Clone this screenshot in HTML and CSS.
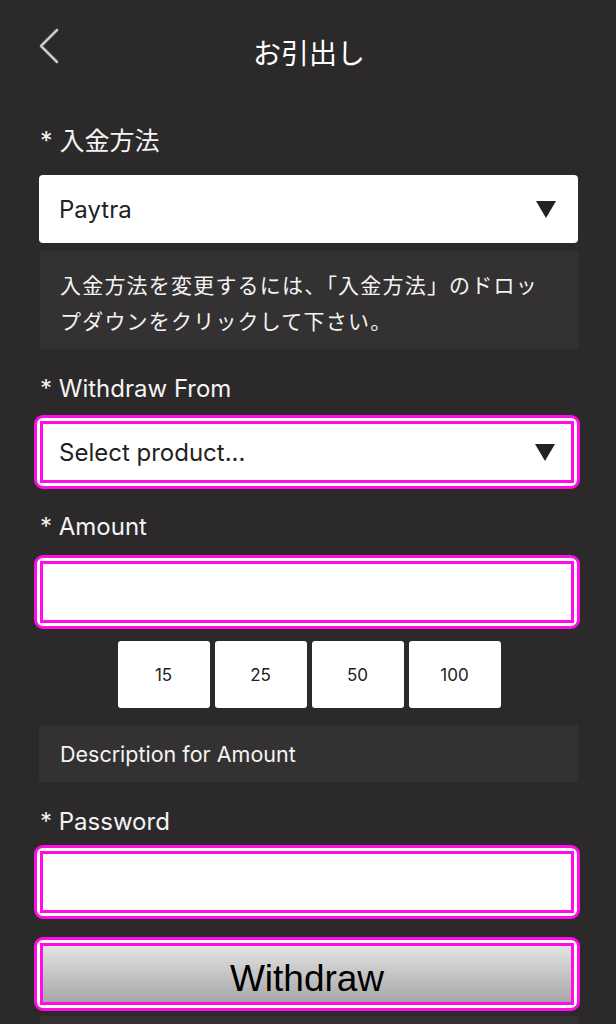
FILE: index.html
```html
<!DOCTYPE html>
<html lang="ja">
<head>
<meta charset="utf-8">
<title>お引出し</title>
<link rel="stylesheet" href="styles.css">
</head>
<body>
<div class="page">
  <header class="header">
    <a class="back" href="#" aria-label="back">
      <svg width="22" height="36" viewBox="0 0 22 36"><path d="M19 2 L3 18 L19 34" fill="none" stroke="#c8c8c8" stroke-width="2.6" stroke-linecap="round" stroke-linejoin="round"/></svg>
    </a>
    <h1 class="title">お引出し</h1>
    <span></span>
  </header>

  <label class="label first">* 入金方法</label>
  <div class="select plain">
    <span>Paytra</span>
    <svg class="caret" width="20" height="17" viewBox="0 0 20 17"><path d="M0 0 H20 L10 17 Z" fill="#222"/></svg>
  </div>
  <div class="note">入金方法を変更するには、「入金方法」のドロップダウンをクリックして下さい。</div>

  <label class="label l2">* Withdraw From</label>
  <div class="ring r1">
    <div class="select inner">
      <span>Select product...</span>
      <svg class="caret" width="20" height="17" viewBox="0 0 20 17"><path d="M0 0 H20 L10 17 Z" fill="#222"/></svg>
    </div>
  </div>

  <label class="label l3">* Amount</label>
  <div class="ring r2">
    <div class="input inner"></div>
  </div>

  <div class="quick">
    <button class="qbtn">15</button>
    <button class="qbtn">25</button>
    <button class="qbtn">50</button>
    <button class="qbtn">100</button>
  </div>

  <div class="desc">Description for Amount</div>

  <label class="label l4">* Password</label>
  <div class="ring r3">
    <div class="input inner"></div>
  </div>

  <div class="ring r4">
    <button class="submit inner">Withdraw</button>
  </div>

  <div class="footer-box"></div>
</div>
</body>
</html>
```

FILE: styles.css
```css
* { box-sizing: border-box; }
html, body { margin: 0; padding: 0; }
body {
  background: #2b292a;
  font-family: Inter, "Noto Sans CJK JP", sans-serif;
  color: #f4f4f4;
  height: 1024px;
  overflow: hidden;
}
.page {
  padding: 0 38px 0 40px;
  display: flex;
  flex-direction: column;
}
.header {
  height: 104px;
  display: grid;
  grid-template-columns: 1fr auto 1fr;
  align-items: start;
}
.back { display: block; margin-top: 28px; margin-left: -2px; width: 22px; height: 36px; }
.back svg { display: block; }
.title {
  margin: 0;
  padding-top: 34px;
  font-family: "Noto Sans CJK JP", sans-serif;
  font-weight: 400;
  font-size: 28px;
  line-height: 36px;
  color: #fff;
}
.label {
  display: block;
  font-size: 24px;
  line-height: 36px;
  color: #f4f4f4;
}
.label.first { margin-top: 19px; font-size: 25px; }
.l2 { margin-top: 22px; }
.l3 { margin-top: 20px; }
.l4 { margin-top: 22px; }

.select {
  background: #fff;
  color: #222;
  font-size: 24px;
  display: flex;
  align-items: center;
  justify-content: space-between;
}
.select.plain {
  margin-top: 16px;
  height: 68px;
  border-radius: 4px;
  padding: 0 22px 0 20px;
  margin-left: -1px;
}
.caret { display: block; }
.note {
  margin-top: 8px;
  background: #333132;
  padding: 15px 20px 11px 20px;
  font-family: "Noto Sans CJK JP", sans-serif;
  font-size: 21px;
  line-height: 36px;
  letter-spacing: 1.2px;
  color: #f4f4f4;
}
.ring {
  margin: 0 -2px 0 -6px;
  border: 3px solid #ff0ce6;
  border-radius: 9px;
  padding: 3px;
  background: #fff;
}
.r1 { margin-top: 8px; }
.r2 { margin-top: 10px; }
.r3 { margin-top: 5px; }
.r4 { margin-top: 18px; }
.inner {
  height: 62px;
  border: 3px solid #ff0ce6;
  background: #fff;
}
.select.inner { padding: 0 16px 0 16px; }
.submit {
  display: block;
  width: 100%;
  margin: 0;
  background: linear-gradient(#e3e3e3, #a7a7a7);
  font-family: "Liberation Sans", sans-serif;
  font-size: 37px;
  color: #000;
  padding: 9px 0 0 0;
}
.quick {
  margin-top: 12px;
  display: flex;
  justify-content: center;
  gap: 5px;
}
.qbtn {
  width: 92px;
  height: 67px;
  border: 0;
  border-radius: 3px;
  background: #fff;
  color: #222;
  font-family: Inter, sans-serif;
  font-size: 17px;
  padding: 0;
}
.desc {
  margin-top: 17px;
  margin-left: -1px;
  height: 57px;
  background: #333132;
  padding: 0 21px;
  display: flex;
  align-items: center;
  font-size: 21.5px;
  color: #f4f4f4;
}
.footer-box {
  margin-top: 5px;
  height: 40px;
  background: #333132;
}
```
